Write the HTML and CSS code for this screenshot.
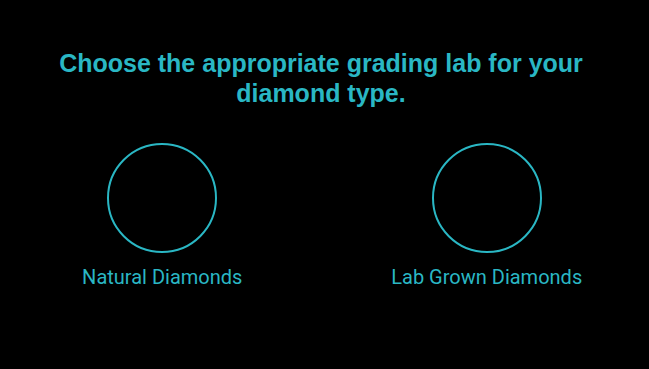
FILE: index.html
```html
<!DOCTYPE html>
<html>
<head>
<meta charset="utf-8">
<link rel="stylesheet" href="styles.css">
</head>
<body>
<div class="page">
  <h1 class="title">Choose the appropriate grading lab for your diamond type.</h1>
  <div class="options">
    <div class="option">
      <div class="circle"></div>
      <div class="label">Natural Diamonds</div>
    </div>
    <div class="option">
      <div class="circle"></div>
      <div class="label">Lab Grown Diamonds</div>
    </div>
  </div>
</div>
</body>
</html>
```
FILE: styles.css
```css
html, body {
  margin: 0;
  padding: 0;
  background: #000;
}
.page {
  width: 649px;
  height: 369px;
  box-sizing: border-box;
  padding-top: 48px;
}
.title {
  margin: 0 0 0 41px;
  width: 560px;
  text-align: center;
  font-family: "Liberation Sans", Arial, sans-serif;
  font-weight: bold;
  font-size: 25px;
  line-height: 30px;
  color: #2ab7c4;
}
.options {
  display: grid;
  grid-template-columns: 1fr 1fr;
  margin-top: 35px;
}
.option {
  display: flex;
  flex-direction: column;
  align-items: center;
}
.circle {
  width: 106px;
  height: 106px;
  border: 2px solid #2ab7c4;
  border-radius: 50%;
}
.label {
  margin-top: 12px;
  font-family: Roboto, sans-serif;
  font-size: 20px;
  line-height: 24px;
  color: #2ab7c4;
}
```
